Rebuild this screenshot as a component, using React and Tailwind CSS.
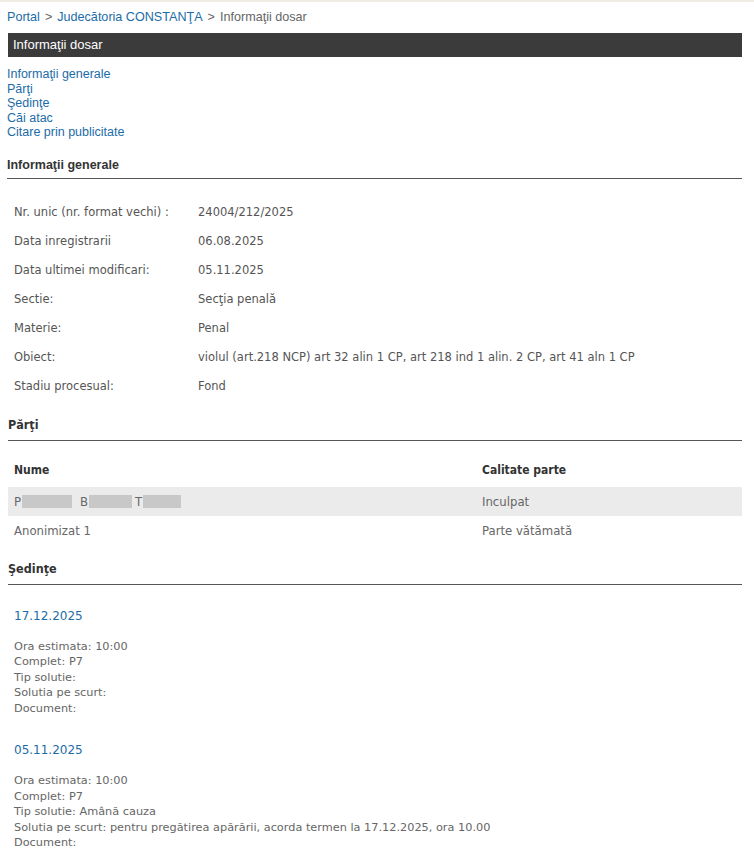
import React from 'react';

const info = [
  ['Nr. unic (nr. format vechi) :', '24004/212/2025'],
  ['Data inregistrarii', '06.08.2025'],
  ['Data ultimei modificari:', '05.11.2025'],
  ['Sectie:', 'Secţia penală'],
  ['Materie:', 'Penal'],
  ['Obiect:', 'violul (art.218 NCP) art 32 alin 1 CP, art 218 ind 1 alin. 2 CP, art 41 aln 1 CP'],
  ['Stadiu procesual:', 'Fond'],
];

const sedinte = [
  {
    data: '17.12.2025',
    ora: '10:00',
    complet: 'P7',
    tip: '',
    solutie: '',
  },
  {
    data: '05.11.2025',
    ora: '10:00',
    complet: 'P7',
    tip: 'Amână cauza',
    solutie: 'pentru pregătirea apărării, acorda termen la 17.12.2025, ora 10.00',
  },
];

const arial = "font-['Liberation_Sans',Arial,sans-serif]";
const tahoma = "font-['DejaVu_Sans',Verdana,sans-serif]";
const narrow = "font-['DejaVu_Sans_Condensed','Liberation_Sans_Narrow','Liberation_Sans',sans-serif]";

const Redacted = ({ w, ml, mr }) => (
  <span className="inline-block h-[13px] bg-[#c8c8c8]" style={{ width: w, marginLeft: ml, marginRight: mr }} />
);

const App = () => {
  return (
    <div className="min-h-[855px] bg-white border-t-2 border-[#f0ede4] px-2 text-[#555]">
      <div className={`${arial} text-[12.6px] pt-[6px] h-[31px] text-[#666]`}>
        <a className="text-[#1b6ca8] ml-[-1px]">Portal</a>
        <span className="mx-[5px]">&gt;</span>
        <a className="text-[#1b6ca8]">Judecătoria CONSTANŢA</a>
        <span className="mx-[5px]">&gt;</span>
        Informaţii dosar
      </div>

      <div className={`${arial} bg-[#3b3b3b] text-white text-[13px] h-[24px] leading-[24px] px-[5px] mr-[4px]`}>
        Informaţii dosar
      </div>

      <div className={`${arial} flex flex-col text-[12.5px] leading-[14.5px] text-[#1b6ca8] mt-[10px] ml-[-1px]`}>
        <a>Informaţii generale</a>
        <a>Părţi</a>
        <a>Şedinţe</a>
        <a>Căi atac</a>
        <a>Citare prin publicitate</a>
      </div>

      <div className={`${arial} font-bold text-[12.5px] text-[#333] mt-[16px] pb-[4px] border-b border-[#555] mr-[4px] ml-[-1px]`}>
        Informaţii generale
      </div>

      <div className={`${tahoma} text-[11.5px] mt-[25px] px-[6px]`}>
        {info.map(([label, value]) => (
          <div key={label} className="flex h-[29px] items-start">
            <div className="w-[184px] shrink-0">{label}</div>
            <div>{value}</div>
          </div>
        ))}
      </div>

      <div className={`${narrow} font-bold text-[12.5px] text-[#333] mt-[9px] pb-[5px] border-b border-[#555] mr-[4px]`}>
        Părţi
      </div>

      <div className={`${narrow} text-[13px] mt-[20px] mr-[4px]`}>
        <div className="flex px-[6px] h-[26px] font-bold text-[12px] text-[#333]">
          <div className="w-[468px]">Nume</div>
          <div>Calitate parte</div>
        </div>
        <div className="flex px-[6px] h-[29px] items-center bg-[#ebebeb] text-[#666]">
          <div className="w-[468px] flex items-center">
            P<Redacted w={50} ml={1} mr={8} />B<Redacted w={43} ml={1} mr={3} />T<Redacted w={38} ml={1} />
          </div>
          <div>Inculpat</div>
        </div>
        <div className="flex px-[6px] h-[29px] items-center text-[#666]">
          <div className="w-[468px]">Anonimizat 1</div>
          <div>Parte vătămată</div>
        </div>
      </div>

      <div className={`${narrow} font-bold text-[12.5px] text-[#333] mt-[15px] pb-[5px] border-b border-[#555] mr-[4px]`}>
        Şedinţe
      </div>

      <div className={`${tahoma} px-[6px] text-[#666]`}>
        {sedinte.map((s) => (
          <div key={s.data} className="pt-[22px] pb-[3px]">
            <div className="text-[12px] text-[#1b6ca8] mb-[14px]">{s.data}</div>
            <div className="text-[11.3px] leading-[15.5px]">
              <div>Ora estimata: {s.ora}</div>
              <div>Complet: {s.complet}</div>
              <div>Tip solutie: {s.tip}</div>
              <div>Solutia pe scurt: {s.solutie}</div>
              <div>Document:</div>
            </div>
          </div>
        ))}
      </div>
    </div>
  );
};

export default App;
